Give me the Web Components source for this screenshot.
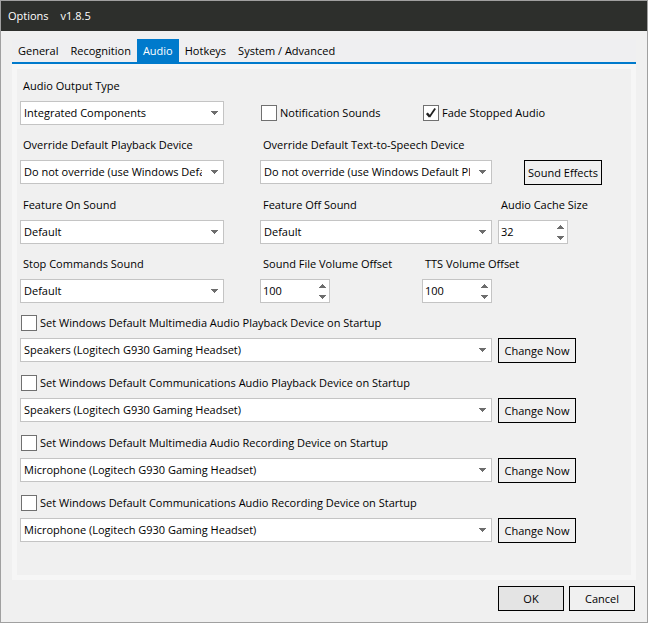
<!DOCTYPE html>
<html lang="en">
<head>
<meta charset="utf-8">
<title>Options</title>
<style>
    body {
        margin: 0;
        font: 11px/16px "Open Sans", "Noto Sans", sans-serif;
        color: #000;
        background: #f0f0f0;
    }
    .fields {
        display: grid;
        grid-template-columns: 240fr 238fr 130fr;
        row-gap: 12px;
    }
    .pair {
        display: flex;
        grid-column: 2 / -1;
    }
    .pair > * {
        flex: 0 0 162px;
    }
    .inset {
        padding-right: 36px;
    }
    .gutter {
        padding-right: 6px;
    }
    .checks {
        align-self: end;
        align-items: center;
        height: 24px;
    }
    .effects {
        padding: 23px 0 0 26px;
    }
</style>
</head>
<body>

<options-window heading="Options" version="v1.8.5">
    <tab-strip slot="tabs" tabs="General|Recognition|Audio|Hotkeys|System / Advanced" active="Audio"></tab-strip>

    <div class="fields">
        <select-field class="inset" label="Audio Output Type" value="Integrated Components"></select-field>
        <div class="pair checks">
            <check-field label="Notification Sounds"></check-field>
            <check-field label="Fade Stopped Audio" checked></check-field>
        </div>

        <select-field class="inset" label="Override Default Playback Device" value="Do not override (use Windows Default Playback Device)"></select-field>
        <select-field class="gutter" label="Override Default Text-to-Speech Device" value="Do not override (use Windows Default Playback Device)"></select-field>
        <push-button class="effects">Sound Effects</push-button>

        <select-field class="inset" label="Feature On Sound" value="Default"></select-field>
        <select-field class="gutter" label="Feature Off Sound" value="Default"></select-field>
        <number-field label="Audio Cache Size" value="32"></number-field>

        <select-field class="inset" label="Stop Commands Sound" value="Default"></select-field>
        <div class="pair">
            <number-field label="Sound File Volume Offset" value="100"></number-field>
            <number-field label="TTS Volume Offset" value="100"></number-field>
        </div>
    </div>

    <device-setting label="Set Windows Default Multimedia Audio Playback Device on Startup" device="Speakers (Logitech G930 Gaming Headset)"></device-setting>
    <device-setting label="Set Windows Default Communications Audio Playback Device on Startup" device="Speakers (Logitech G930 Gaming Headset)"></device-setting>
    <device-setting label="Set Windows Default Multimedia Audio Recording Device on Startup" device="Microphone (Logitech G930 Gaming Headset)"></device-setting>
    <device-setting label="Set Windows Default Communications Audio Recording Device on Startup" device="Microphone (Logitech G930 Gaming Headset)"></device-setting>

    <push-button slot="actions" size="small" primary>OK</push-button>
    <push-button slot="actions" size="small">Cancel</push-button>
</options-window>

<script>

// dialog frame: title bar, tabs, panel and action buttons

class OptionsWindow extends HTMLElement {
    constructor() {
        super();

        this.attachShadow({ mode: 'open' });
        this.shadowRoot.innerHTML = `
        <style>
            :host {
                display: flex;
                flex-direction: column;
                box-sizing: border-box;
                min-height: 100vh;
                border: 1px solid #a0a0a0;
            }
            header {
                display: flex;
                align-items: center;
                gap: 12px;
                height: 30px;
                padding: 0 7px;
                color: #fff;
                background: #2d2f2c;
            }
            h1 {
                margin: 0;
                font: inherit;
            }
            main {
                display: flex;
                flex-direction: column;
                flex: 1;
                margin: 8px 11px 0;
            }
            section {
                display: flex;
                flex-direction: column;
                gap: 12px;
                flex: 1;
                padding: 9px 3px;
                border: 5px solid #f6f6f6;
            }
            footer {
                display: flex;
                justify-content: flex-end;
                gap: 5px;
                padding: 6px 12px 11px;
            }
        </style>
        <header><h1></h1><span></span></header>
        <main>
            <slot name="tabs"></slot>
            <section><slot></slot></section>
        </main>
        <footer><slot name="actions"></slot></footer>
        `;
    }

    connectedCallback() {
        this.shadowRoot.querySelector('h1').textContent = this.getAttribute('heading');
        this.shadowRoot.querySelector('span').textContent = this.getAttribute('version');
    }
}

class TabStrip extends HTMLElement {
    constructor() {
        super();

        this.attachShadow({ mode: 'open' });
        this.shadowRoot.innerHTML = `
        <style>
            :host {
                display: block;
                border-bottom: 2px solid #007acc;
                background: #efeff1;
            }
            div {
                display: flex;
            }
            button {
                height: 23px;
                padding: 0 6px;
                border: 0;
                font: inherit;
                color: inherit;
                background: none;
            }
            button[aria-selected="true"] {
                color: #fff;
                background: #007acc;
            }
        </style>
        <div role="tablist"></div>
        `;
    }

    connectedCallback() {
        const list = this.shadowRoot.querySelector('div');
        list.replaceChildren();
        for (const name of this.getAttribute('tabs').split('|')) {
            const tab = document.createElement('button');
            tab.type = 'button';
            tab.textContent = name;
            tab.setAttribute('role', 'tab');
            tab.setAttribute('aria-selected', name === this.getAttribute('active'));
            tab.addEventListener('click', () => this.select(tab));
            list.append(tab);
        }
    }

    select(tab) {
        for (const other of this.shadowRoot.querySelectorAll('button')) {
            other.setAttribute('aria-selected', other === tab);
        }
    }
}

// without a label attribute, name is used for screen readers only

class SelectField extends HTMLElement {
    constructor() {
        super();

        this.attachShadow({ mode: 'open' });
        this.shadowRoot.innerHTML = `
        <style>
            :host {
                display: block;
                min-width: 0;
            }
            label {
                display: block;
                margin-bottom: 7px;
                padding-left: 3px;
                white-space: nowrap;
            }
            .box {
                display: grid;
                align-items: center;
            }
            select, svg {
                grid-area: 1 / 1;
            }
            select {
                appearance: none;
                box-sizing: border-box;
                width: 100%;
                height: 24px;
                margin: 0;
                padding: 0 21px 0 3px;
                border: 1px solid #c4c4c4;
                border-radius: 0;
                font: inherit;
                color: inherit;
                background: #fff;
            }
            svg {
                justify-self: end;
                margin-right: 6px;
                fill: #6d6d6d;
                pointer-events: none;
            }
        </style>
        <label for="field"></label>
        <div class="box">
            <select id="field"></select>
            <svg width="7" height="4" viewBox="0 0 7 4" shape-rendering="crispEdges"><path d="M0 0H7V1H6V2H5V3H4V4H3V3H2V2H1V1H0Z"/></svg>
        </div>
        `;
    }

    connectedCallback() {
        const label = this.shadowRoot.querySelector('label');
        const select = this.shadowRoot.querySelector('select');
        if (this.hasAttribute('label')) {
            label.textContent = this.getAttribute('label');
        } else {
            label.style.display = 'none';
            select.setAttribute('aria-label', this.getAttribute('name'));
        }
        select.replaceChildren(new Option(this.getAttribute('value')));
    }
}

class NumberField extends HTMLElement {
    constructor() {
        super();

        this.attachShadow({ mode: 'open' });
        this.shadowRoot.innerHTML = `
        <style>
            :host {
                display: block;
            }
            label {
                display: block;
                margin-bottom: 7px;
                padding-left: 3px;
                white-space: nowrap;
            }
            .box {
                display: flex;
                box-sizing: border-box;
                width: 70px;
                height: 24px;
                border: 1px solid #c4c4c4;
                background: #fff;
            }
            input {
                appearance: textfield;
                flex: 1;
                min-width: 0;
                padding: 0 2px;
                border: 0;
                outline: 0;
                font: inherit;
                color: inherit;
                background: none;
            }
            input::-webkit-inner-spin-button {
                display: none;
            }
            .steps {
                display: flex;
                flex-direction: column;
                width: 14px;
            }
            button {
                display: grid;
                flex: 1;
                place-items: center;
                padding: 0;
                border: 0;
                background: none;
            }
            svg {
                fill: #6d6d6d;
            }
        </style>
        <label for="field"></label>
        <div class="box">
            <input id="field" type="number">
            <div class="steps">
                <button type="button" aria-label="Increase"><svg width="7" height="4" viewBox="0 0 7 4" shape-rendering="crispEdges"><path d="M0 4H7V3H6V2H5V1H4V0H3V1H2V2H1V3H0Z"/></svg></button>
                <button type="button" aria-label="Decrease"><svg width="7" height="4" viewBox="0 0 7 4" shape-rendering="crispEdges"><path d="M0 0H7V1H6V2H5V3H4V4H3V3H2V2H1V1H0Z"/></svg></button>
            </div>
        </div>
        `;

        const input = this.shadowRoot.querySelector('input');
        const [up, down] = this.shadowRoot.querySelectorAll('button');
        up.addEventListener('click', () => input.stepUp());
        down.addEventListener('click', () => input.stepDown());
    }

    connectedCallback() {
        this.shadowRoot.querySelector('label').textContent = this.getAttribute('label');
        this.shadowRoot.querySelector('input').value = this.getAttribute('value');
    }
}

class CheckField extends HTMLElement {
    constructor() {
        super();

        this.attachShadow({ mode: 'open' });
        this.shadowRoot.innerHTML = `
        <style>
            :host {
                display: block;
            }
            label {
                display: flex;
                align-items: center;
                gap: 3px;
                padding-left: 1px;
                white-space: nowrap;
            }
            .box {
                display: grid;
            }
            input, svg {
                grid-area: 1 / 1;
            }
            input {
                appearance: none;
                box-sizing: border-box;
                width: 16px;
                height: 16px;
                margin: 0;
                border: 1px solid #707070;
                background: #fff;
            }
            svg {
                visibility: hidden;
                fill: none;
                stroke: #212121;
                pointer-events: none;
            }
            input:checked + svg {
                visibility: visible;
            }
        </style>
        <label>
            <span class="box">
                <input type="checkbox">
                <svg width="16" height="16" viewBox="0 0 16 16"><path d="M3.8 8.2L6.8 11.6" stroke-width="2.4"/><path d="M6.4 12L12.2 3.4" stroke-width="1.8"/></svg>
            </span>
            <span class="text"></span>
        </label>
        `;
    }

    connectedCallback() {
        this.shadowRoot.querySelector('.text').textContent = this.getAttribute('label');
        this.shadowRoot.querySelector('input').checked = this.hasAttribute('checked');
    }
}

class PushButton extends HTMLElement {
    constructor() {
        super();

        this.attachShadow({ mode: 'open' });
        this.shadowRoot.innerHTML = `
        <style>
            :host {
                display: block;
            }
            button {
                display: block;
                box-sizing: border-box;
                width: 78px;
                height: 25px;
                padding: 1px 0 0;
                border: 1px solid #000;
                font: inherit;
                color: inherit;
                white-space: nowrap;
                background: #f0f0f0;
            }
            :host([size="small"]) button {
                width: 66px;
            }
            :host([primary]) button {
                background: #e4e4e4;
            }
        </style>
        <button type="button"><slot></slot></button>
        `;
    }
}

// tick box above a device list, with its own apply button

class DeviceSetting extends HTMLElement {
    constructor() {
        super();

        this.attachShadow({ mode: 'open' });
    }

    connectedCallback() {
        const label = this.getAttribute('label');
        const device = this.getAttribute('device');

        this.shadowRoot.innerHTML = `
        <style>
            :host {
                display: grid;
                grid-template-columns: 478fr 130fr;
                row-gap: 7px;
            }
            check-field {
                grid-column: 1 / -1;
            }
            select-field {
                padding-right: 6px;
            }
        </style>
        <check-field label="${label}"></check-field>
        <select-field name="${label}" value="${device}"></select-field>
        <push-button>Change Now</push-button>
        `;
    }
}

window.customElements.define('options-window', OptionsWindow);
window.customElements.define('tab-strip', TabStrip);
window.customElements.define('select-field', SelectField);
window.customElements.define('number-field', NumberField);
window.customElements.define('check-field', CheckField);
window.customElements.define('push-button', PushButton);
window.customElements.define('device-setting', DeviceSetting);

</script>
</body>
</html>
